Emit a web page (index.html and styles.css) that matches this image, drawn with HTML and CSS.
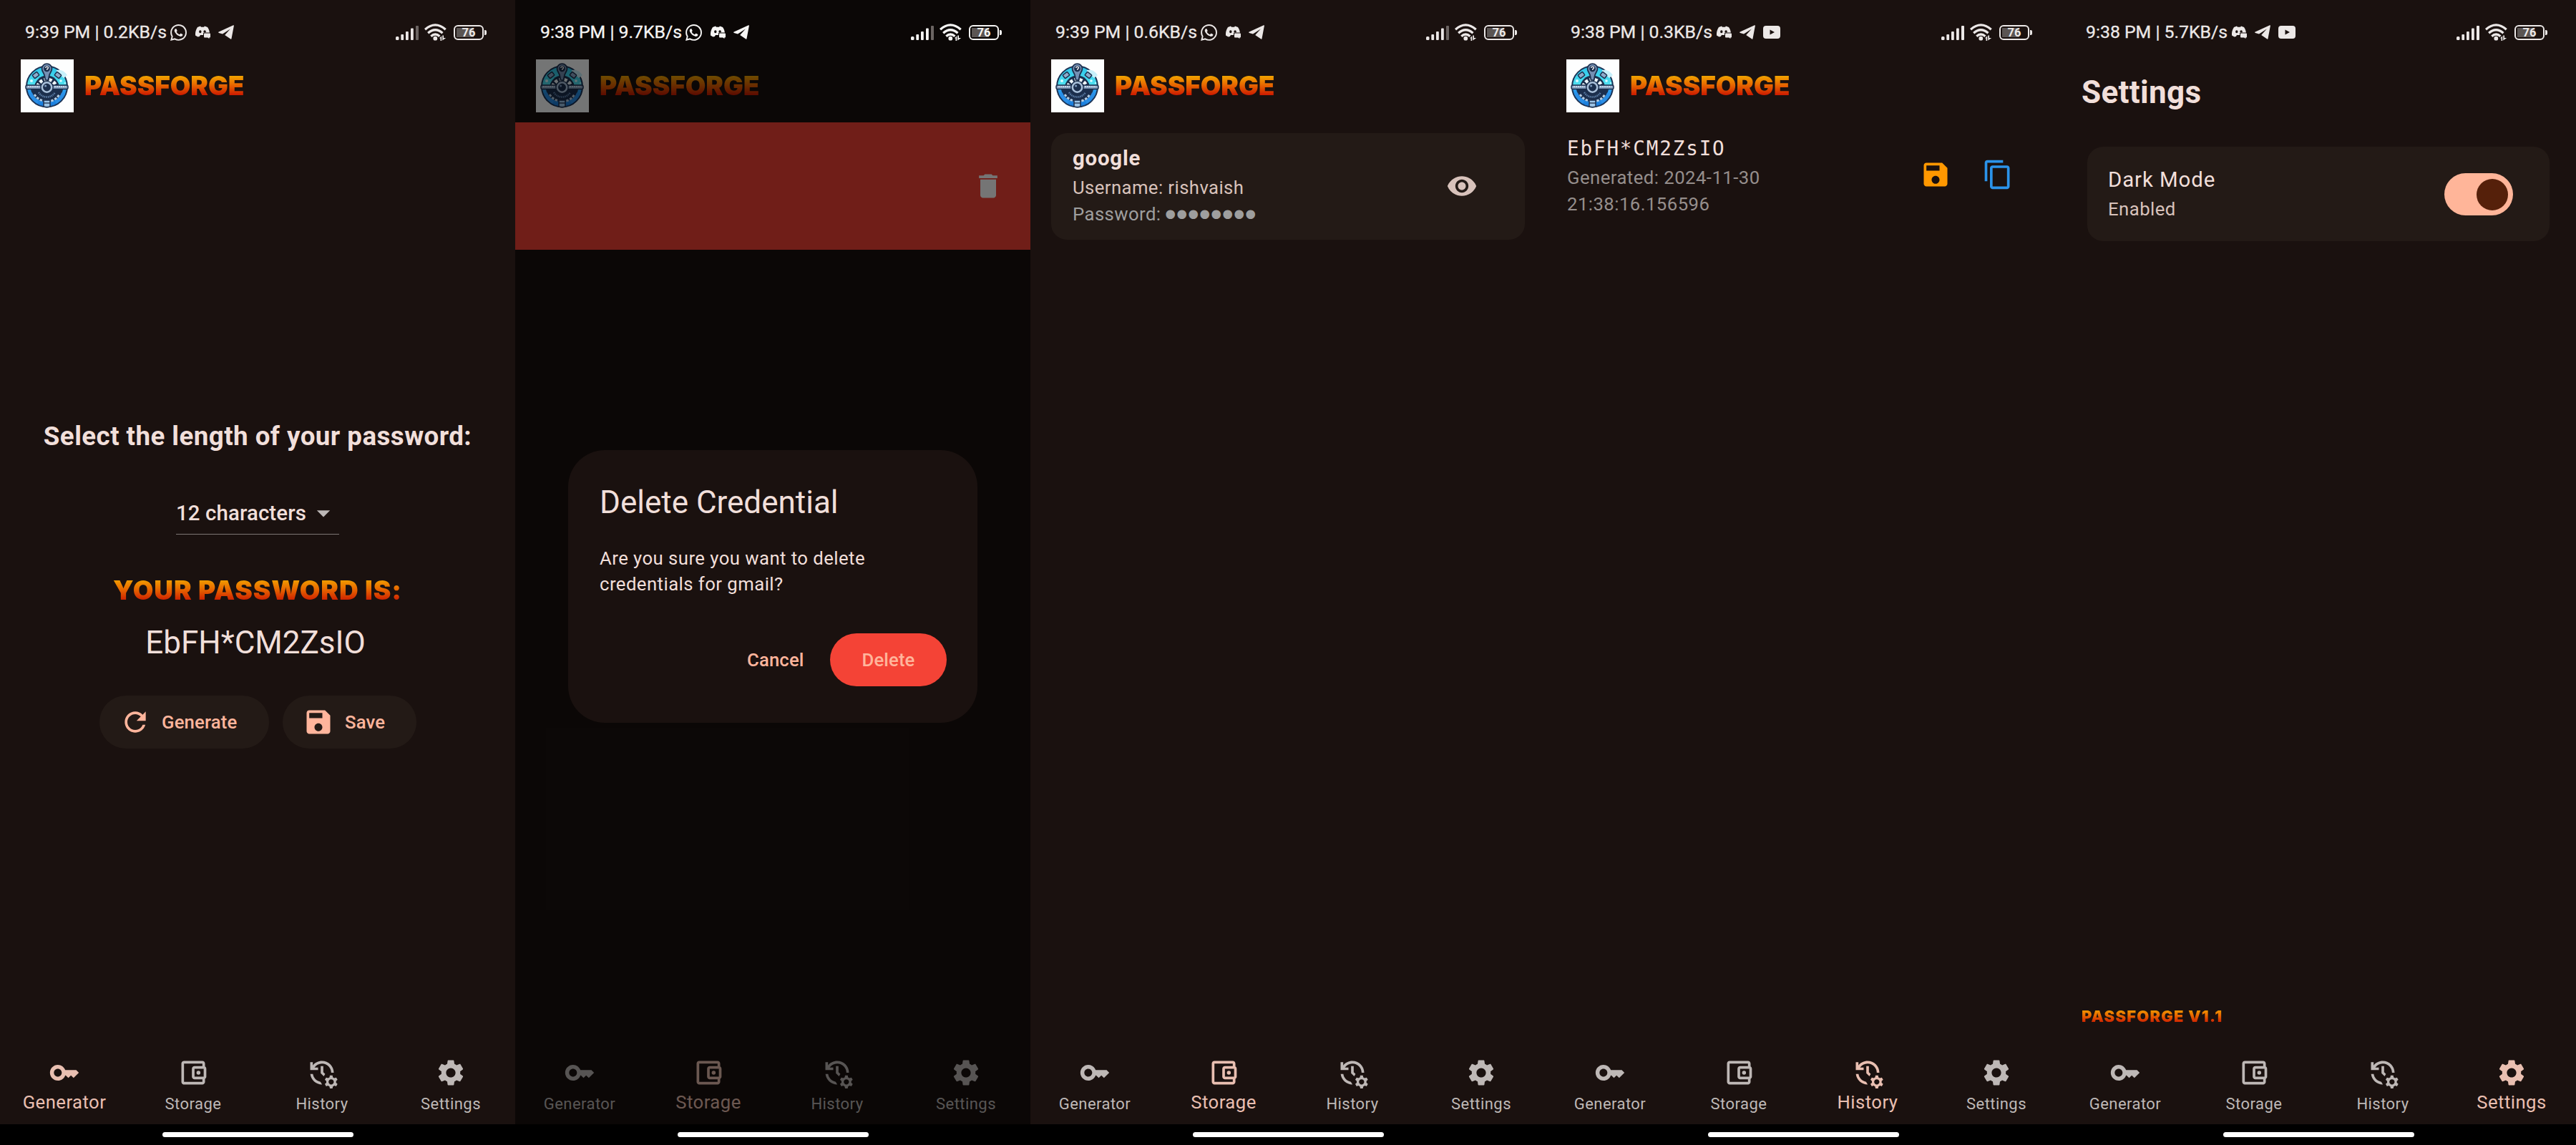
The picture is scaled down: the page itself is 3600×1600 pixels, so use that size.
FILE: index.html
```html
<!DOCTYPE html>
<html lang="en">
<head>
<meta charset="utf-8">
<title>PassForge</title>
<link rel="stylesheet" href="styles.css">
</head>
<body>
<svg class="sprite" aria-hidden="true">
  <defs>
    <linearGradient id="sky" x1="0" y1="0" x2="0" y2="1">
      <stop offset="0" stop-color="#2cc4ea"/><stop offset=".45" stop-color="#4fe0f0"/><stop offset=".6" stop-color="#2a9df0"/><stop offset="1" stop-color="#1878d8"/>
    </linearGradient>
  </defs>
  <symbol id="key" viewBox="0 0 24 24"><path d="M21 10h-8.35C11.83 7.67 9.61 6 7 6c-3.31 0-6 2.69-6 6s2.69 6 6 6c2.61 0 4.83-1.67 5.65-4H13l2 2 2-2 2 2 4-4.04L21 10zM7 15c-1.65 0-3-1.35-3-3s1.35-3 3-3 3 1.350 3 3-1.35 3-3 3z"/></symbol>
  <symbol id="wallet" viewBox="0 0 24 24"><path d="M21 7.28V5c0-1.100-.9-2-2-2H5c-1.110 0-2 .9-2 2v14c0 1.100.89 2 2 2h14c1.100 0 2-.9 2-2v-2.280c.59-.35 1-.98 1-1.720V9c0-.74-.41-1.370-1-1.720zM20 9v6h-7V9h7zM5 19V5h14v2h-6c-1.100 0-2 .9-2 2v6c0 1.100.9 2 2 2h6v2H5z"/><circle cx="16" cy="12" r="1.500"/></symbol>
  <symbol id="history" viewBox="0 0 24 24"><path d="M22.690 18.370l1.140-1-1-1.730-1.450.49c-.32-.27-.68-.48-1.080-.63L20 14h-2l-.3 1.490c-.4.15-.76.36-1.080.63l-1.450-.49-1 1.730 1.140 1c-.08.5-.08.76 0 1.260l-1.140 1 1 1.730 1.450-.49c.32.27.68.48 1.080.63L18 24h2l.3-1.490c.4-.15.76-.36 1.080-.63l1.450.49 1-1.730-1.140-1c.08-.51.08-.77 0-1.270zM19 21c-1.100 0-2-.9-2-2s.9-2 2-2 2 .9 2 2-.9 2-2 2zM11 7v5.410l2.360 2.360 1.040-1.790-1.400-1.390V7h-2zm10 5c0-4.970-4.030-9-9-9-2.830 0-5.350 1.320-7 3.360V4H3v6h6V8H6.260C7.530 6.190 9.630 5 12 5c3.860 0 7 3.140 7 7h2zm-10.140 6.910c-2.990-.49-5.350-2.900-5.780-5.910H3.060c.5 4.500 4.310 8 8.940 8h.07l-1.210-2.090z"/></symbol>
  <symbol id="gear" viewBox="0 0 24 24"><path d="M19.140 12.940c.04-.3.06-.61.06-.94 0-.32-.02-.64-.07-.94l2.030-1.580c.18-.14.23-.41.12-.61l-1.920-3.320c-.12-.22-.37-.29-.59-.22l-2.390.96c-.5-.38-1.030-.7-1.620-.94l-.36-2.540c-.04-.24-.24-.41-.48-.41h-3.840c-.24 0-.43.17-.47.41l-.36 2.540c-.59.24-1.130.57-1.620.94l-2.390-.96c-.22-.08-.47 0-.59.22L2.740 8.870c-.12.21-.08.47.12.61l2.030 1.580c-.05.3-.09.63-.09.94s.02.64.07.94l-2.030 1.580c-.18.14-.23.41-.12.61l1.920 3.320c.12.22.37.29.59.22l2.390-.96c.5.38 1.030.7 1.620.94l.36 2.540c.05.24.24.41.48.41h3.840c.24 0 .44-.17.47-.41l.36-2.540c.59-.24 1.130-.56 1.620-.94l2.390.96c.22.08.47 0 .59-.22l1.920-3.320c.12-.22.07-.47-.12-.61l-2.010-1.580zM12 15.600c-1.980 0-3.600-1.620-3.600-3.600s1.620-3.600 3.600-3.600 3.600 1.620 3.600 3.600-1.620 3.600-3.600 3.600z"/></symbol>
  <symbol id="save" viewBox="0 0 24 24"><path d="M17 3H5c-1.110 0-2 .9-2 2v14c0 1.100.89 2 2 2h14c1.100 0 2-.9 2-2V7l-4-4zm-5 16c-1.660 0-3-1.340-3-3s1.340-3 3-3 3 1.340 3 3-1.340 3-3 3zm3-10H5V5h10v4z"/></symbol>
  <symbol id="refresh" viewBox="0 0 24 24"><path d="M17.650 6.350C16.200 4.900 14.210 4 12 4c-4.420 0-7.990 3.580-7.990 8s3.570 8 7.990 8c3.730 0 6.840-2.550 7.730-6h-2.080c-.82 2.330-3.040 4-5.650 4-3.310 0-6-2.690-6-6s2.690-6 6-6c1.660 0 3.140.69 4.220 1.780L13 11h7V4l-2.350 2.350z"/></symbol>
  <symbol id="trash" viewBox="0 0 24 24"><path d="M6 19c0 1.100.9 2 2 2h8c1.100 0 2-.9 2-2V7H6v12zM19 4h-3.500l-1-1h-5l-1 1H5v2h14V4z"/></symbol>
  <symbol id="copy" viewBox="0 0 24 24"><path d="M16 1H4c-1.100 0-2 .9-2 2v14h2V3h12V1zm3 4H8c-1.100 0-2 .9-2 2v14c0 1.100.9 2 2 2h11c1.100 0 2-.9 2-2V7c0-1.100-.9-2-2-2zm0 16H8V7h11v14z"/></symbol>
  <symbol id="eye" viewBox="0 0 24 24"><path d="M12 4.500C7 4.500 2.730 7.610 1 12c1.730 4.390 6 7.500 11 7.500s9.270-3.110 11-7.500c-1.730-4.390-6-7.500-11-7.500zM12 17c-2.760 0-5-2.240-5-5s2.240-5 5-5 5 2.240 5 5-2.240 5-5 5zm0-8c-1.660 0-3 1.340-3 3s1.340 3 3 3 3-1.340 3-3-1.340-3-3-3z"/></symbol>
  <symbol id="caret" viewBox="0 0 24 24"><path d="M7 10l5 5 5-5z"/></symbol>

  <symbol id="whatsapp" viewBox="0 0 24 24"><path d="M17.472 14.382c-.297-.149-1.758-.867-2.030-.967-.273-.099-.471-.148-.67.15-.197.297-.767.966-.94 1.164-.173.199-.347.223-.644.075-.297-.15-1.255-.463-2.390-1.475-.883-.788-1.480-1.761-1.653-2.059-.173-.297-.018-.458.13-.606.134-.133.298-.347.446-.52.149-.174.198-.298.298-.497.099-.198.05-.371-.025-.52-.075-.149-.669-1.612-.916-2.207-.242-.579-.487-.5-.669-.51-.173-.008-.371-.01-.57-.01-.198 0-.52.074-.792.372-.272.297-1.040 1.016-1.040 2.479 0 1.462 1.065 2.875 1.213 3.074.149.198 2.096 3.200 5.077 4.487.709.306 1.262.489 1.694.625.712.227 1.360.195 1.871.118.571-.085 1.758-.719 2.006-1.413.248-.694.248-1.289.173-1.413-.074-.124-.272-.198-.57-.347m-5.421 7.403h-.004a9.870 9.870 0 01-5.031-1.378l-.361-.214-3.741.982.998-3.648-.235-.374a9.860 9.860 0 01-1.510-5.260c.001-5.450 4.436-9.884 9.888-9.884 2.640 0 5.122 1.030 6.988 2.898a9.825 9.825 0 012.893 6.994c-.003 5.450-4.437 9.884-9.885 9.884m8.413-18.297A11.815 11.815 0 0012.050 0C5.495 0 .16 5.335.157 11.892c0 2.096.547 4.142 1.588 5.945L.057 24l6.305-1.654a11.882 11.882 0 005.683 1.448h.005c6.554 0 11.890-5.335 11.893-11.893a11.821 11.821 0 00-3.480-8.413z"/></symbol>
  <symbol id="discord" viewBox="0 0 22 18"><path fill-rule="evenodd" d="M4 2 8 .5 9 1.800h4L14 .5 18 2c1.600 2.200 2.600 4.600 2.900 7.500H13.500c-.9 0-1.500.6-1.500 1.500v2H8l-1.200 2L4.500 15.500 1 13.500C.7 9 1.600 5.500 4 2zM7.800 6.200a1.700 2 0 100 4 1.700 2 0 000-4zm6.300 0c-1 0-1.700.9-1.700 2l.3 1h2.900l.2-1c0-1.100-.8-2-1.700-2z"/><path d="M14 10.500h7a1 1 0 011 1v4a1 1 0 01-1 1h-.6V18l-2.200-1.500H14a1 1 0 01-1-1v-4a1 1 0 011-1z"/></symbol>
  <symbol id="telegram" viewBox="0 0 22 20"><path d="M21 .3c.6-.2 1 .1.900.7L18.500 19c-.1.700-.6.900-1.200.5L9.200 14l7.600-8.400L6 12.600.8 10.900c-.9-.3-.9-.9 0-1.300z"/></symbol>
  <symbol id="youtube" viewBox="0 0 24 18"><path fill-rule="evenodd" d="M4 0h16a4 4 0 014 4v10a4 4 0 01-4 4H4a4 4 0 01-4-4V4a4 4 0 014-4zm5.500 5.500v7L16 9z"/></symbol>
  <symbol id="signal" viewBox="0 0 32 21"><rect x="0" y="16" width="4.500" height="5" rx="1.500"/><rect x="7.300" y="13" width="3.800" height="8" rx="1"/><rect x="14" y="9" width="3.800" height="12" rx="1"/><rect x="21" y="4.500" width="3.800" height="16.500" rx="1"/></symbol>
  <symbol id="wifi" viewBox="0 0 31 24"><g fill="none" stroke="currentColor" stroke-width="3.300"><path d="M1 8.200Q15.300-4.400 29.700 8.200"/><path d="M5.200 13.200Q15.300 4.200 25.500 13.200"/><path d="M9.300 17.700Q15.300 12.300 21.400 17.700"/></g><circle cx="15.300" cy="20.700" r="2.900"/><path d="M21 20.500l3.200-3.300V24h-1.700v-3.500zM25.300 16.500h1.700v3.500h3.200L25.300 23.500z"/></symbol>

  <symbol id="logo" viewBox="0 0 74 74">
    <rect width="74" height="74" fill="#fdfefe"/>
    <circle cx="36.500" cy="38" r="28.500" fill="url(#sky)" stroke="#1c3456" stroke-width="2"/>
    <path d="M50 15q9-2 15 7l-5 4q-5-5-10-5z" fill="#c8f0fa"/>
    <g fill="#d9fbff"><circle cx="15" cy="30" r="2"/><circle cx="21" cy="21" r="1.200"/><circle cx="56" cy="30" r="1.800"/><circle cx="62" cy="33" r="1"/></g>
    <path d="M19 40a17.500 17.500 0 0135 0z" fill="#1c2f4d"/>
    <path d="M23.500 38a13.500 13.500 0 0126 0" fill="none" stroke="#eef6fa" stroke-width="5" stroke-dasharray="4.200 2.600"/>
    <g fill="#8fabcb" stroke="#1c2f4d" stroke-width="1.500"><rect x="17" y="19" width="8" height="6" rx="1" transform="rotate(-38 21 22)"/><rect x="48" y="19" width="8" height="6" rx="1" transform="rotate(38 52 22)"/></g>
    <path d="M14 42h45q-3 15-22.500 18Q17 57 14 42z" fill="#1c2f4d"/>
    <g fill="none"><path d="M19 49q6 9 17.500 9.500T54 49" stroke="#b4cbe0" stroke-width="3" stroke-dasharray="3.500 1.800"/><path d="M25 46q4 6.500 11.500 6.500T48 46" stroke="#5d7fa8" stroke-width="2.500" stroke-dasharray="1.500 1"/><path d="M14 47q3 9 10 13M59 47q-3 9-10 13" stroke="#2a8ee6" stroke-width="4"/></g>
    <path d="M32 57h9v9q-4.500 1.500-9 0z" fill="#9cc4e6" stroke="#1c2f4d" stroke-width="1.500"/><path d="M32 61h9" stroke="#1c2f4d" stroke-width="1.300"/>
    <rect x="7" y="36" width="59" height="5.500" rx="2" fill="#8aa3c2" stroke="#1c2f4d" stroke-width="1.500"/>
    <path d="M10 38h16M47 38h16" stroke="#dbe8f3" stroke-width="1.500" stroke-dasharray="2 1"/>
    <path d="M36.500 6a7 7 0 017 7c0 4-4 7-4 11l-1 5h-4l-1-5c0-4-4-7-4-11a7 7 0 017-7z" fill="#7590b4" stroke="#1c2f4d" stroke-width="1.700"/>
    <circle cx="36.500" cy="13" r="4.300" fill="#1c2f4d"/>
    <path d="M34.700 12q.2-1.900 1.900-1.900 1.800 0 1.800 1.600 0 1.200-1.700 1.900v1.200" fill="none" stroke="#fff" stroke-width="1.300"/>
    <circle cx="36.500" cy="39" r="9.300" fill="#1c2f4d"/><circle cx="36.500" cy="39" r="6.700" fill="#1c2f4d" stroke="#a9c0da" stroke-width="2.500"/><circle cx="34.600" cy="37" r="1.500" fill="#7e9cc0"/>
  </symbol>
</svg>

<main class="phones">
  <section class="phone">
    <header class="status">
      <span class="clock">9:39 PM | 0.2KB/s</span>
      <div class="apps"><svg class="i-whatsapp"><use href="#whatsapp"/></svg><svg class="i-discord"><use href="#discord"/></svg><svg class="i-telegram"><use href="#telegram"/></svg></div>
      <div class="system"><span class="signal weak"><svg><use href="#signal"/></svg></span><svg class="i-wifi"><use href="#wifi"/></svg><span class="battery">76</span></div>
    </header>
    <div class="appbar"><svg class="logo"><use href="#logo"/></svg><h1 class="fire brand">PASSFORGE</h1></div>
    <div class="body generator">
      <h2 class="prompt">Select the length of your password:</h2>
      <div class="dropdown"><span>12 characters</span><svg class="icon"><use href="#caret"/></svg></div>
      <p class="fire caption">YOUR PASSWORD IS:</p>
      <p class="password">EbFH*CM2ZsIO</p>
      <div class="buttons">
        <button class="btn tonal generate"><svg class="icon"><use href="#refresh"/></svg>Generate</button>
        <button class="btn tonal save"><svg class="icon"><use href="#save"/></svg>Save</button>
      </div>
    </div>
    <nav class="nav">
      <a class="tab active"><svg class="icon"><use href="#key"/></svg><span>Generator</span></a>
      <a class="tab"><svg class="icon"><use href="#wallet"/></svg><span>Storage</span></a>
      <a class="tab"><svg class="icon"><use href="#history"/></svg><span>History</span></a>
      <a class="tab"><svg class="icon"><use href="#gear"/></svg><span>Settings</span></a>
    </nav>
    <footer class="gesture"><i></i></footer>
  </section>

  <section class="phone">
    <header class="status bright">
      <span class="clock">9:38 PM | 9.7KB/s</span>
      <div class="apps"><svg class="i-whatsapp"><use href="#whatsapp"/></svg><svg class="i-discord"><use href="#discord"/></svg><svg class="i-telegram"><use href="#telegram"/></svg></div>
      <div class="system"><span class="signal weak"><svg><use href="#signal"/></svg></span><svg class="i-wifi"><use href="#wifi"/></svg><span class="battery">76</span></div>
    </header>
    <div class="appbar"><svg class="logo"><use href="#logo"/></svg><h1 class="fire brand">PASSFORGE</h1></div>
    <div class="body">
      <div class="swipe"><svg class="icon"><use href="#trash"/></svg></div>
    </div>
    <nav class="nav">
      <a class="tab"><svg class="icon"><use href="#key"/></svg><span>Generator</span></a>
      <a class="tab active"><svg class="icon"><use href="#wallet"/></svg><span>Storage</span></a>
      <a class="tab"><svg class="icon"><use href="#history"/></svg><span>History</span></a>
      <a class="tab"><svg class="icon"><use href="#gear"/></svg><span>Settings</span></a>
    </nav>
    <footer class="gesture"><i></i></footer>
    <div class="scrim">
      <div class="dialog">
        <h2>Delete Credential</h2>
        <p>Are you sure you want to delete<br>credentials for gmail?</p>
        <div class="actions"><button class="btn text">Cancel</button><button class="btn danger">Delete</button></div>
      </div>
    </div>
  </section>

  <section class="phone">
    <header class="status">
      <span class="clock">9:39 PM | 0.6KB/s</span>
      <div class="apps"><svg class="i-whatsapp"><use href="#whatsapp"/></svg><svg class="i-discord"><use href="#discord"/></svg><svg class="i-telegram"><use href="#telegram"/></svg></div>
      <div class="system"><span class="signal weak"><svg><use href="#signal"/></svg></span><svg class="i-wifi"><use href="#wifi"/></svg><span class="battery">76</span></div>
    </header>
    <div class="appbar"><svg class="logo"><use href="#logo"/></svg><h1 class="fire brand">PASSFORGE</h1></div>
    <div class="body">
      <article class="card credential">
        <div>
          <h3>google</h3>
          <p class="user">Username: rishvaish</p>
          <p class="secret">Password: <span class="dots">●●●●●●●●</span></p>
        </div>
        <svg class="icon"><use href="#eye"/></svg>
      </article>
    </div>
    <nav class="nav">
      <a class="tab"><svg class="icon"><use href="#key"/></svg><span>Generator</span></a>
      <a class="tab active"><svg class="icon"><use href="#wallet"/></svg><span>Storage</span></a>
      <a class="tab"><svg class="icon"><use href="#history"/></svg><span>History</span></a>
      <a class="tab"><svg class="icon"><use href="#gear"/></svg><span>Settings</span></a>
    </nav>
    <footer class="gesture"><i></i></footer>
  </section>

  <section class="phone">
    <header class="status">
      <span class="clock">9:38 PM | 0.3KB/s</span>
      <div class="apps"><svg class="i-discord"><use href="#discord"/></svg><svg class="i-telegram"><use href="#telegram"/></svg><svg class="i-youtube"><use href="#youtube"/></svg></div>
      <div class="system"><span class="signal"><svg><use href="#signal"/></svg></span><svg class="i-wifi"><use href="#wifi"/></svg><span class="battery">76</span></div>
    </header>
    <div class="appbar"><svg class="logo"><use href="#logo"/></svg><h1 class="fire brand">PASSFORGE</h1></div>
    <div class="body">
      <article class="entry">
        <div>
          <h3>EbFH*CM2ZsIO</h3>
          <p>Generated: 2024-11-30<br>21:38:16.156596</p>
        </div>
        <div class="tools"><svg class="icon orange"><use href="#save"/></svg><svg class="icon blue"><use href="#copy"/></svg></div>
      </article>
    </div>
    <nav class="nav">
      <a class="tab"><svg class="icon"><use href="#key"/></svg><span>Generator</span></a>
      <a class="tab"><svg class="icon"><use href="#wallet"/></svg><span>Storage</span></a>
      <a class="tab active"><svg class="icon"><use href="#history"/></svg><span>History</span></a>
      <a class="tab"><svg class="icon"><use href="#gear"/></svg><span>Settings</span></a>
    </nav>
    <footer class="gesture"><i></i></footer>
  </section>

  <section class="phone">
    <header class="status">
      <span class="clock">9:38 PM | 5.7KB/s</span>
      <div class="apps"><svg class="i-discord"><use href="#discord"/></svg><svg class="i-telegram"><use href="#telegram"/></svg><svg class="i-youtube"><use href="#youtube"/></svg></div>
      <div class="system"><span class="signal"><svg><use href="#signal"/></svg></span><svg class="i-wifi"><use href="#wifi"/></svg><span class="battery">76</span></div>
    </header>
    <div class="body settings">
      <h1 class="heading">Settings</h1>
      <div class="card option">
        <div><h3>Dark Mode</h3><p>Enabled</p></div>
        <span class="switch"><i></i></span>
      </div>
      <p class="fire version">PASSFORGE V1.1</p>
    </div>
    <nav class="nav">
      <a class="tab"><svg class="icon"><use href="#key"/></svg><span>Generator</span></a>
      <a class="tab"><svg class="icon"><use href="#wallet"/></svg><span>Storage</span></a>
      <a class="tab"><svg class="icon"><use href="#history"/></svg><span>History</span></a>
      <a class="tab active"><svg class="icon"><use href="#gear"/></svg><span>Settings</span></a>
    </nav>
    <footer class="gesture"><i></i></footer>
  </section>
</main>
</body>
</html>
```
FILE: styles.css
```css
* { box-sizing: border-box; margin: 0; padding: 0; }

body {
  background: #000;
  color: #f1dfda;
  font-family: Roboto, "Liberation Sans", sans-serif;
}

svg { display: block; fill: currentColor; flex: none; }
.sprite { position: absolute; width: 0; height: 0; }
h1, h2, h3, p, span, button { white-space: nowrap; }

.phones { display: flex; width: 3600px; height: 1600px; }
.phone {
  position: relative;
  display: flex;
  flex-direction: column;
  width: 720px;
  height: 1600px;
  background: #1a110f;
}
.icon { width: 44px; height: 44px; }

/* Status bar */
.status {
  display: flex;
  align-items: center;
  height: 68px;
  padding: 22px 44px 0 35px;
  color: #ece8e7;
}
.status.bright { position: relative; z-index: 2; color: #f6f5f4; }
.clock { width: 203px; font-size: 24.8px; font-weight: 400; line-height: 46px; -webkit-text-stroke: .3px currentColor; }
.apps { display: flex; align-items: center; gap: 11px; }
.i-whatsapp { width: 23px; height: 23px; }
.i-discord { width: 22px; height: 18px; }
.i-telegram { width: 22px; height: 20px; }
.i-youtube { width: 24px; height: 18px; }
.i-wifi { width: 31px; height: 24px; }
.system { display: flex; align-items: center; gap: 8px; margin-left: auto; }
.signal { display: flex; align-items: flex-end; }
.signal svg { width: 32px; height: 21px; margin-right: -4px; }
.signal::after { content: ""; width: 4px; height: 20px; border-radius: 1px; background: currentColor; }
.signal.weak::after { background: #6b6462; }
.battery {
  position: relative;
  width: 42px;
  height: 21px;
  margin-left: 2px;
  border: 2px solid currentColor;
  border-radius: 6px;
  background: linear-gradient(#5b5553, #5b5553) 2px 2px / 24px 13px no-repeat;
  font-size: 16.5px;
  font-weight: 700;
  line-height: 18px;
  text-align: center;
}
.battery::after {
  content: "";
  position: absolute;
  top: 5px;
  right: -6px;
  width: 3px;
  height: 7px;
  border-radius: 0 2px 2px 0;
  background: currentColor;
}

/* App bar */
.appbar { display: flex; align-items: center; gap: 15px; height: 103px; padding-left: 29px; }
.logo { width: 74px; height: 74px; }
.fire {
  background: linear-gradient(#f2a600 12%, #e86a00 45%, #c91200 88%);
  -webkit-background-clip: text;
  background-clip: text;
  color: transparent;
  font-family: Inter, Roboto, sans-serif;
  font-weight: 900;
}
.brand { font-size: 37px; line-height: 38px; letter-spacing: -.1px; }

.body { display: flex; flex-direction: column; flex: 1; }

/* Generator */
.generator { align-items: center; padding-top: 416.5px; }
.prompt { font-size: 36.7px; line-height: 44px; letter-spacing: .46px; }
.dropdown {
  display: flex;
  align-items: center;
  justify-content: space-between;
  width: 228px;
  height: 60px;
  margin-top: 55.5px;
  border-bottom: 1.5px solid #7d7674;
  font-size: 29.4px;
  font-weight: 500;
  letter-spacing: .12px;
}
.dropdown .icon { color: #bdb8b7; }
.caption { margin-top: 55.5px; font-size: 37px; line-height: 44px; letter-spacing: .95px; }
.password { margin-top: 25.5px; padding-right: 6px; font-size: 44px; line-height: 52px; }
.buttons { display: flex; gap: 19px; margin-top: 47.5px; }
.btn {
  display: flex;
  align-items: center;
  height: 74px;
  border: 0;
  border-radius: 37px;
  background: none;
  color: #ffb59c;
  font: 500 25.7px Roboto, sans-serif;
  letter-spacing: .15px;
}
.tonal { gap: 15.5px; padding-left: 28px; background: #231a16; }
.generate { width: 237px; }
.save { width: 187px; }

/* Storage */
.swipe {
  display: flex;
  align-items: center;
  justify-content: flex-end;
  height: 178px;
  padding-right: 37px;
  background: #f44336;
  color: #fff;
}
.card { display: flex; align-items: center; justify-content: space-between; border-radius: 22px; background: #231a16; }
.credential { height: 149px; margin: 14.5px 29px 0; padding: 0 66px 0 30px; }
.credential h3 { padding-top: 1px; font-size: 29.4px; line-height: 37px; letter-spacing: .8px; }
.credential p { font-size: 25.7px; line-height: 36.7px; letter-spacing: .42px; }
.credential .user { margin-top: 4px; color: #d8c2bb; }
.credential .secret { display: flex; align-items: center; gap: 6px; color: #9e9e9e; }
.credential .icon { color: #d8c2bb; }
.dots { font-family: "DejaVu Sans", sans-serif; font-size: 16.5px; line-height: 20px; letter-spacing: 1.6px; }

/* Delete dialog */
.scrim {
  position: absolute;
  inset: 0 0 29px;
  display: flex;
  align-items: flex-start;
  justify-content: center;
  padding-top: 628.5px;
  background: rgba(0, 0, 0, .54);
}
.dialog { width: 572px; height: 381px; padding: 44px 43px 0 44px; border-radius: 51px; background: #1a110f; }
.dialog h2 { font-size: 44px; font-weight: 400; line-height: 59px; }
.dialog p { margin-top: 30px; font-size: 25.7px; line-height: 36.7px; letter-spacing: .46px; }
.actions { display: flex; align-items: center; justify-content: flex-end; gap: 36.5px; margin-top: 50px; }
.danger { justify-content: center; width: 163px; background: #f44336; }

/* History */
.entry { display: flex; align-items: flex-start; justify-content: space-between; padding: 18px 66px 0 30px; }
.entry h3 {
  font-family: "DejaVu Sans Mono", monospace;
  font-size: 27.6px;
  font-weight: 400;
  line-height: 37px;
  letter-spacing: 1.85px;
}
.entry p { margin-top: 3.8px; color: #958e8c; font-size: 25.7px; line-height: 36.7px; letter-spacing: .46px; }
.tools { display: flex; gap: 43px; padding-top: 33px; }
.orange { color: #ff9800; }
.blue { color: #2b93ea; }

/* Settings */
.heading { margin: 35px 0 0 29px; font-size: 44px; line-height: 52px; letter-spacing: .35px; }
.option { height: 132px; margin: 49.5px 37px 0; padding: 2px 51px 0 29px; }
.option h3 { font-size: 29.4px; font-weight: 400; line-height: 36px; letter-spacing: .92px; }
.option p { margin-top: 5.5px; color: #d8c2bb; font-size: 25.7px; line-height: 36px; letter-spacing: .46px; }
.switch {
  display: flex;
  align-items: center;
  justify-content: flex-end;
  width: 96px;
  height: 59px;
  padding-right: 7px;
  border-radius: 30px;
  background: #ffb599;
}
.switch i { width: 44px; height: 44px; border-radius: 50%; background: #55200a; }
.version { align-self: flex-start; margin: auto 0 16px 29px; font-size: 22px; line-height: 28px; letter-spacing: 1.15px; }

/* Bottom navigation */
.nav { display: flex; height: 121px; }
.tab { display: flex; flex: 1; flex-direction: column; align-items: center; padding-top: 27px; color: #beb8b6; }
.tab span { margin-top: 6.5px; font-size: 22px; line-height: 30px; letter-spacing: .46px; }
.tab.active { color: #e9bfb1; }
.tab.active span { font-size: 25.7px; line-height: 25px; }

.gesture { display: flex; justify-content: center; height: 29px; padding-top: 11px; background: #000; }
.gesture i { width: 267px; height: 7px; border-radius: 4px; background: #fff; }
```
